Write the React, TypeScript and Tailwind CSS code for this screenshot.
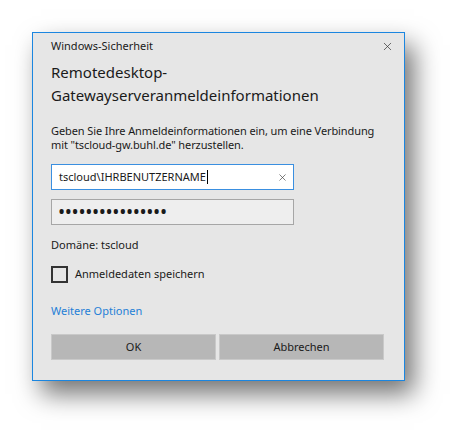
import { X } from "lucide-react";

export default function App() {
  return (
    <div className="w-[470px] h-[446px] bg-white pl-[32px] pt-[32px] font-['Noto_Sans',sans-serif] text-[#1a1a1a]">
      {/* Dialog */}
      <div className="w-[373px] h-[349px] bg-[#e6e6e6] border border-[#1b86e0] shadow-[9px_13px_24px_rgba(0,0,0,0.55)] flex flex-col px-[18px]">
        {/* Title bar */}
        <div className="h-[25px] mt-[1px] flex items-center justify-between">
          <span className="text-[11px]">Windows-Sicherheit</span>
          <X className="w-[13px] h-[13px] text-[#333] -mr-[8px]" strokeWidth={1.3} />
        </div>

        <h1 className="mt-[2px] text-[15px] leading-[23px]">
          Remotedesktop-
          <br />
          Gatewayserveranmeldeinformationen
        </h1>

        <p className="mt-[17px] text-[11px] leading-[14px] tracking-[-0.1px]">
          Geben Sie Ihre Anmeldeinformationen ein, um eine Verbindung mit "tscloud-gw.buhl.de" herzustellen.
        </p>

        {/* Username */}
        <div className="mt-[12px] w-[243px] h-[26px] bg-white border border-[#3a8fe0] flex items-center pl-[7px] pr-[5px]">
          <span className="text-[11px]">tscloud\IHRBENUTZERNAME</span>
          <span className="w-px h-[14px] bg-black ml-[1px]" />
          <X className="ml-auto w-[11px] h-[11px] text-[#444]" strokeWidth={1.5} />
        </div>

        {/* Password */}
        <div className="mt-[9px] w-[243px] h-[26px] bg-[#eeeeee] border border-[#a6a6a6] flex items-center pl-[6px]">
          <span className="text-[19px] tracking-[-0.35px] leading-none">••••••••••••••••</span>
        </div>

        <div className="mt-[12px] text-[11px] leading-[16px]">Domäne: tscloud</div>

        {/* Checkbox */}
        <label className="mt-[13px] flex items-center gap-[7px]">
          <span className="w-[17px] h-[17px] border-2 border-[#333] bg-transparent" />
          <span className="text-[11px]">Anmeldedaten speichern</span>
        </label>

        <a className="mt-[20px] text-[11px] leading-[16px] text-[#1f7fd6]">Weitere Optionen</a>

        {/* Buttons */}
        <div className="mt-[15px] flex gap-[3px]">
          <button className="w-[165px] h-[26px] bg-[#b7b7b7] border border-[#c9c9c9] text-[11px]">OK</button>
          <button className="w-[165px] h-[26px] bg-[#b7b7b7] border border-[#c9c9c9] text-[11px]">Abbrechen</button>
        </div>
      </div>
    </div>
  );
}
